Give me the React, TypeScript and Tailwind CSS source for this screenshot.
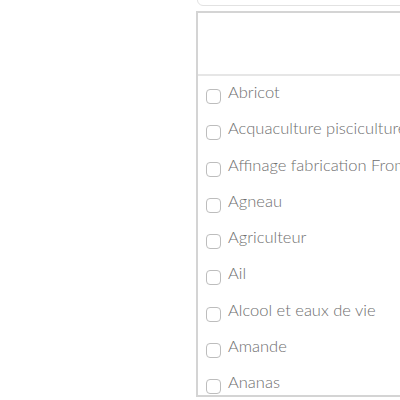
const items = [
  'Abricot',
  'Acquaculture pisciculture',
  'Affinage fabrication Fromage',
  'Agneau',
  'Agriculteur',
  'Ail',
  'Alcool et eaux de vie',
  'Amande',
  'Ananas',
];

export default function App() {
  return (
    <div className="h-[400px] w-[400px] overflow-hidden bg-white font-['Lato',sans-serif]">
      <div className="ml-[197px] -mt-[34px] h-[40px] w-[260px] rounded-b-md border border-[#e2e2e2]" />
      <div className="ml-[196px] mt-[5px] h-[386px] w-[260px] border-2 border-[#d4d4d4]">
        <div className="h-[63px] border-b-2 border-[#e6e6e6]" />
        <ul>
          {items.map((item) => (
            <li key={item} className="flex h-[36.25px] items-start gap-[7px] pl-[8px]">
              <span className="mt-[13px] h-[15px] w-[15px] shrink-0 rounded-[4px] border border-[#bdbdbd] bg-white" />
              <span className="mt-[6px] whitespace-nowrap text-[16.5px] leading-[20px] font-light text-[#6e6e6e]">
                {item}
              </span>
            </li>
          ))}
        </ul>
      </div>
    </div>
  );
}
